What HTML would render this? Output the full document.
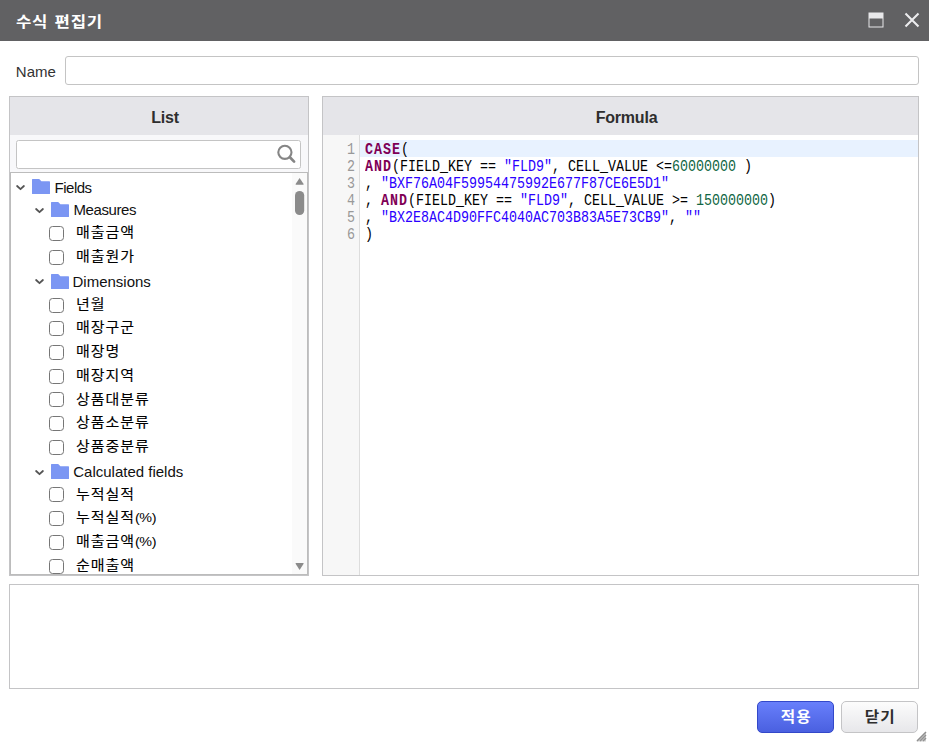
<!DOCTYPE html>
<html lang="ko">
<head>
<meta charset="utf-8">
<title>수식 편집기</title>
<style>
*{box-sizing:border-box;margin:0;padding:0}
html,body{width:929px;height:745px;overflow:hidden;background:#fff}
body{position:relative;font-family:"Liberation Sans","Noto Sans CJK KR","NanumGothic",sans-serif;font-size:15px;color:#222}
.abs{position:absolute}
#titlebar{left:0;top:0;width:929px;height:41px;background:#616163}
#title{left:16px;top:7.8px;height:24px;line-height:24px;color:#fff;font-weight:bold;font-size:15.2px;letter-spacing:0.65px;word-spacing:0.9px;white-space:nowrap;font-family:"Noto Sans CJK KR","NanumGothic",sans-serif;transform:scaleX(1.1);transform-origin:0 50%}
#namelbl{left:15.8px;top:61px;height:22px;line-height:22px;font-size:15px;color:#333}
#nameinp{left:65px;top:56px;width:854px;height:29px;border:1px solid #c4c4c4;border-radius:3px;background:#fff}
.panel{border:1px solid #c4c4c6;background:#f8f8fa}
.phead{left:0;top:0;right:0;height:38px;background:#e5e5e9;text-align:center;line-height:38px;font-weight:bold;font-size:16px;letter-spacing:-0.2px;color:#2e2e2e;padding-left:12px;padding-top:2px}
#list{left:9px;top:96px;width:300px;height:480px}
#formula{left:322px;top:96px;width:597px;height:480px;background:#fff}
#search{left:6px;top:43px;width:285px;height:29px;border:1px solid #c4c4c4;border-radius:2.5px;background:#fff}
#tree{left:0;top:75px;width:298px;height:403px;border:1px solid #bcbcbc;background:#fff;overflow:hidden}
#track{right:0;top:0;width:15px;height:401px;background:#fafafa}
.row{position:absolute;left:0;height:24px;line-height:24px;white-space:nowrap;font-size:15px;color:#111}
.row span{position:absolute;top:0}
.cb{position:absolute;top:4.5px;width:15px;height:15px;border:1.4px solid #767676;border-radius:3.5px;background:#fff}
.chev{position:absolute;top:9.8px;fill:none;stroke:#555;stroke-width:1.8;stroke-linecap:round;stroke-linejoin:round}
.fold{position:absolute;top:4.2px;fill:#7b96f3}
.ft{font-size:15px}
.row i{-webkit-text-stroke:0;font-style:normal;font-family:"Liberation Sans",sans-serif;font-size:13.4px;letter-spacing:-0.4px}
.ko{font-family:"Noto Sans CJK KR","NanumGothic",sans-serif;font-size:14px;letter-spacing:0.9px;transform:scaleX(1.07);transform-origin:0 50%;display:inline-block;color:#000;-webkit-text-stroke:0.1px #000}
#gutter{left:0;top:38px;width:37px;height:440px;background:#f7f7f7;border-right:1px solid #ddd}
#active{left:37px;top:43px;right:0;height:17px;background:#e8f2ff}
.ln{position:absolute;left:0;width:32px;text-align:right;height:17px;line-height:17px;font-family:"Liberation Mono",monospace;font-size:13.33px;color:#999;transform:scaleY(1.25);transform-origin:0 50%}
.cl{position:absolute;left:42px;height:17px;line-height:17px;font-family:"Liberation Mono",monospace;font-size:13.33px;white-space:pre;color:#000;transform:scaleY(1.25);transform-origin:0 50%}
.kw{color:#7f0055;font-weight:bold;letter-spacing:1px}
.st{color:#2a00ff}
.nu{color:#116644}
#desc{left:9px;top:584px;width:910px;height:105px;border:1px solid #c4c4c6;background:#fff}
.btn{top:701px;width:77px;height:32px;border-radius:5px;text-align:center;line-height:28.6px;font-size:14.4px;font-weight:bold;font-family:"Noto Sans CJK KR","NanumGothic",sans-serif}
.btn span{display:inline-block;transform:scaleX(1.09);letter-spacing:0.9px;margin-right:-0.9px}
#apply{left:757px;background:linear-gradient(#687ffb,#4a60e0);border:1px solid #3348c9;color:#fff}
#close{left:841px;background:linear-gradient(#fcfcfc,#e7e7ea);border:1px solid #c4c4c6;color:#2e2e2e}
</style>
</head>
<body>
<div id="titlebar" class="abs"></div>
<div id="title" class="abs">수식 편집기</div>
<svg class="abs" style="left:868px;top:12px" width="16" height="16" viewBox="0 0 16 16"><rect x="1" y="1" width="14" height="14" fill="none" stroke="#e8e8ea" stroke-width="1"/><rect x="1" y="1" width="14" height="5.5" fill="#e8e8ea"/></svg>
<svg class="abs" style="left:904px;top:12px" width="16" height="16" viewBox="0 0 16 16"><path d="M1.5 1.5 L14.5 14.5 M14.5 1.5 L1.5 14.5" stroke="#ececee" stroke-width="2.1" fill="none"/></svg>

<div id="namelbl" class="abs">Name</div>
<div id="nameinp" class="abs"></div>

<div id="list" class="abs panel">
  <div class="abs phead">List</div>
  <div id="search" class="abs"></div>
  <svg class="abs" style="left:265px;top:47px" width="22" height="22" viewBox="0 0 22 22"><circle cx="9.9" cy="8.3" r="6.6" fill="none" stroke="#858585" stroke-width="2.1"/><path d="M14.9 13.3 L19.1 17.6" stroke="#858585" stroke-width="2.7" stroke-linecap="round"/></svg>
  <div id="tree" class="abs">
    <!--TREE-->
<div class="row" style="top:2.0px"><svg class="chev" style="left:5.1px" width="9" height="6" viewBox="0 0 9 6"><path d="M1.1 1 L4.5 4.2 L7.9 1"/></svg><svg class="fold" style="left:21.1px" width="18" height="15" viewBox="0 0 18 15"><path d="M0.6 0 H7.2 L9.4 2.3 H17.4 Q18 2.3 18 2.9 V14.4 Q18 15 17.4 15 H0.6 Q0 15 0 14.4 V0.6 Q0 0 0.6 0 Z"/></svg><span class="ft" style="left:43.6px;letter-spacing:-0.5px;top:1px">Fields</span></div>
<div class="row" style="top:25.0px"><svg class="chev" style="left:24.3px" width="9" height="6" viewBox="0 0 9 6"><path d="M1.1 1 L4.5 4.2 L7.9 1"/></svg><svg class="fold" style="left:40.3px" width="18" height="15" viewBox="0 0 18 15"><path d="M0.6 0 H7.2 L9.4 2.3 H17.4 Q18 2.3 18 2.9 V14.4 Q18 15 17.4 15 H0.6 Q0 15 0 14.4 V0.6 Q0 0 0.6 0 Z"/></svg><span class="ft" style="left:62.8px;letter-spacing:-0.4px;margin-left:-0.4px">Measures</span></div>
<div class="row" style="top:48.3px"><b class="cb" style="left:38px"></b><span class="ko" style="top:-2.3px;left:65.0px">매출금액</span></div>
<div class="row" style="top:72.3px"><b class="cb" style="left:38px"></b><span class="ko" style="top:-2.3px;left:65.0px">매출원가</span></div>
<div class="row" style="top:96.7px"><svg class="chev" style="left:24.3px" width="9" height="6" viewBox="0 0 9 6"><path d="M1.1 1 L4.5 4.2 L7.9 1"/></svg><svg class="fold" style="left:40.3px" width="18" height="15" viewBox="0 0 18 15"><path d="M0.6 0 H7.2 L9.4 2.3 H17.4 Q18 2.3 18 2.9 V14.4 Q18 15 17.4 15 H0.6 Q0 15 0 14.4 V0.6 Q0 0 0.6 0 Z"/></svg><span class="ft" style="left:62.8px;margin-left:-1.3px">Dimensions</span></div>
<div class="row" style="top:120.1px"><b class="cb" style="left:38px"></b><span class="ko" style="top:-2.3px;left:65.0px">년월</span></div>
<div class="row" style="top:143.6px"><b class="cb" style="left:38px"></b><span class="ko" style="top:-2.3px;left:65.0px">매장구군</span></div>
<div class="row" style="top:167.3px"><b class="cb" style="left:38px"></b><span class="ko" style="top:-2.3px;left:65.0px">매장명</span></div>
<div class="row" style="top:191.2px"><b class="cb" style="left:38px"></b><span class="ko" style="top:-2.3px;left:65.0px">매장지역</span></div>
<div class="row" style="top:214.8px"><b class="cb" style="left:38px"></b><span class="ko" style="top:-2.3px;left:65.0px">상품대분류</span></div>
<div class="row" style="top:238.3px"><b class="cb" style="left:38px"></b><span class="ko" style="top:-2.3px;left:65.0px">상품소분류</span></div>
<div class="row" style="top:262.3px"><b class="cb" style="left:38px"></b><span class="ko" style="top:-2.3px;left:65.0px">상품중분류</span></div>
<div class="row" style="top:287.0px"><svg class="chev" style="left:24.3px" width="9" height="6" viewBox="0 0 9 6"><path d="M1.1 1 L4.5 4.2 L7.9 1"/></svg><svg class="fold" style="left:40.3px" width="18" height="15" viewBox="0 0 18 15"><path d="M0.6 0 H7.2 L9.4 2.3 H17.4 Q18 2.3 18 2.9 V14.4 Q18 15 17.4 15 H0.6 Q0 15 0 14.4 V0.6 Q0 0 0.6 0 Z"/></svg><span class="ft" style="left:62.8px;margin-left:-0.6px">Calculated fields</span></div>
<div class="row" style="top:309.8px"><b class="cb" style="left:38px"></b><span class="ko" style="top:-2.3px;left:65.0px">누적실적</span></div>
<div class="row" style="top:333.3px"><b class="cb" style="left:38px"></b><span class="ko" style="top:-2.3px;left:65.0px">누적실적<i>(%)</i></span></div>
<div class="row" style="top:357.2px"><b class="cb" style="left:38px"></b><span class="ko" style="top:-2.3px;left:65.0px">매출금액<i>(%)</i></span></div>
<div class="row" style="top:381.4px"><b class="cb" style="left:38px"></b><span class="ko" style="top:-2.3px;left:65.0px">순매출액</span></div>
<!--/TREE-->
    <div id="track" class="abs"></div>
    <svg class="abs" style="left:284px;top:0" width="12" height="401" viewBox="0 0 12 401"><path d="M0.6 11 L4.6 4.9 L8.6 11 Q9 11.8 8 11.8 H1.2 Q0.2 11.8 0.6 11 Z" fill="#8b8b8b"/><rect x="0" y="18" width="9.2" height="24" rx="4.6" fill="#8b8b8b"/><path d="M0.6 390.8 L4.6 396.9 L8.6 390.8 Q9 390 8 390 H1.2 Q0.2 390 0.6 390.8 Z" fill="#8b8b8b"/></svg>
  </div>
</div>

<div id="formula" class="abs panel">
  <div class="abs phead">Formula</div>
  <div id="gutter" class="abs"></div>
  <div id="active" class="abs"></div>
<!--CODE-->
<div class="ln" style="top:44px">1</div><div class="cl" style="top:44px"><span class="kw">CASE</span>(</div>
<div class="ln" style="top:61px">2</div><div class="cl" style="top:61px"><span class="kw">AND</span>(FIELD_KEY == <span class="st">"FLD9"</span>, CELL_VALUE &lt;=<span class="nu">60000000</span> )</div>
<div class="ln" style="top:78px">3</div><div class="cl" style="top:78px">, <span class="st">"BXF76A04F59954475992E677F87CE6E5D1"</span></div>
<div class="ln" style="top:95px">4</div><div class="cl" style="top:95px">, <span class="kw">AND</span>(FIELD_KEY == <span class="st">"FLD9"</span>, CELL_VALUE &gt;= <span class="nu">150000000</span>)</div>
<div class="ln" style="top:112px">5</div><div class="cl" style="top:112px">, <span class="st">"BX2E8AC4D90FFC4040AC703B83A5E73CB9"</span>, <span class="st">""</span></div>
<div class="ln" style="top:129px">6</div><div class="cl" style="top:129px">)</div>
<!--/CODE-->
</div>

<div id="desc" class="abs"></div>
<div id="apply" class="abs btn"><span>적용</span></div>
<div id="close" class="abs btn"><span>닫기</span></div>
<svg class="abs" style="left:916px;top:731px" width="11" height="11" viewBox="0 0 11 11"><path d="M1 10 L10 1 M4 10 L10 4 M7 10 L10 7" stroke="#8e8e8e" stroke-width="1.5" fill="none"/><path d="M0.5 10.5 H10 V1 Z" fill="#9a9a9a" opacity="0.45"/></svg>
</body>
</html>
